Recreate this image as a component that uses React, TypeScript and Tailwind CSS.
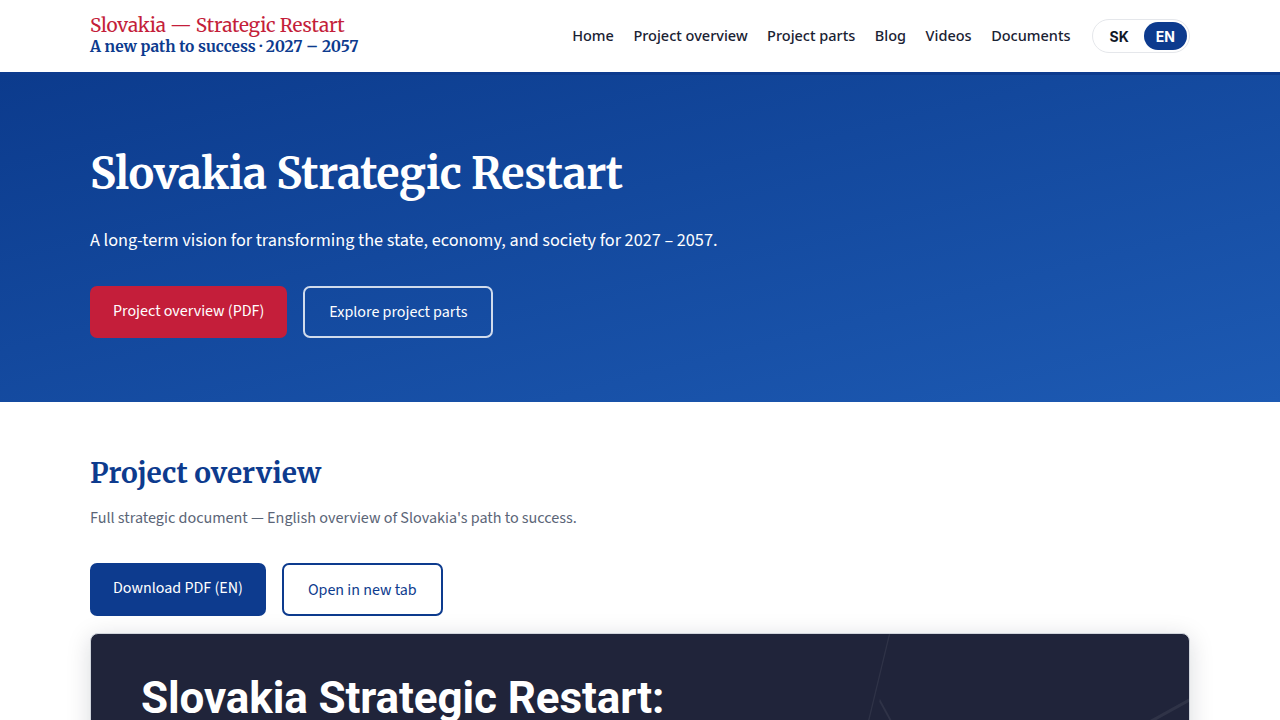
import React from "react";

const serif = "font-['Merriweather','DejaVu_Serif',serif]";
const sans = "font-['Source_Sans_3','Lato',sans-serif]";

const navLinks = ["Home", "Project overview", "Project parts", "Blog", "Videos", "Documents"];

function Header() {
  return (
    <header className="bg-white border-b-[3px] border-[#0d3b8e]">
      <div className="max-w-[1100px] mx-auto h-[72px] flex items-center justify-between">
        <a href="#" className={`${serif} flex flex-col leading-none -mt-[2px]`}>
          <span className="text-[#c41e3a] text-[19px] tracking-[-0.2px]">Slovakia — Strategic Restart</span>
          <span className="text-[#0d3b8e] text-[15.5px] font-bold mt-[4px]">A new path to success · 2027 – 2057</span>
        </a>
        <div className="flex items-center">
          <nav className="font-['Noto_Sans',sans-serif] flex items-center gap-[19.5px] text-[14.5px] font-medium text-[#1a2233] mr-[21px]">
            {navLinks.map((l) => (
              <a key={l} href="#">{l}</a>
            ))}
          </nav>
          <div className="flex items-center h-[34px] rounded-full border border-gray-200 p-[2px] font-['Inter',sans-serif] text-[14px] font-bold">
            <span className="px-[15px] text-[#111827]">SK</span>
            <span className="h-[28px] px-[12px] flex items-center rounded-full bg-[#0d3b8e] text-white">EN</span>
          </div>
        </div>
      </div>
    </header>
  );
}

function Hero() {
  return (
    <section className="bg-gradient-to-br from-[#0c3b8d] to-[#1d5ab3] h-[327px]">
      <div className="max-w-[1100px] mx-auto pt-[78px]">
        <h1 className={`${serif} text-white text-[43px] font-bold leading-none tracking-[-0.5px]`}>
          Slovakia Strategic Restart
        </h1>
        <p className={`${sans} text-white text-[18.2px] mt-[31px]`}>
          A long-term vision for transforming the state, economy, and society for 2027 – 2057.
        </p>
        <div className={`${sans} flex gap-[16px] mt-[32px] text-[16px]`}>
          <a href="#" className="h-[52px] px-[23px] flex items-center rounded-[7px] bg-[#c41e3a] text-white pb-[3px]">
            Project overview (PDF)
          </a>
          <a href="#" className="h-[52px] px-[24px] flex items-center rounded-[7px] border-2 border-white/80 text-white">
            Explore project parts
          </a>
        </div>
      </div>
    </section>
  );
}

// faint diagonal strokes behind the preview title
function PreviewLines() {
  return (
    <svg className="absolute inset-0 w-full h-full" viewBox="0 0 1100 90" preserveAspectRatio="none">
      <g stroke="#ffffff" strokeOpacity="0.07" strokeWidth="1" fill="none">
        <line x1="660" y1="40" x2="850" y2="140" />
        <line x1="640" y1="120" x2="760" y2="30" />
        <line x1="720" y1="100" x2="800" y2="0" />
        <line x1="790" y1="20" x2="990" y2="130" />
        <line x1="880" y1="30" x2="880" y2="120" />
        <line x1="980" y1="40" x2="1100" y2="20" />
        <line x1="1040" y1="110" x2="1100" y2="60" />
      </g>
    </svg>
  );
}

function Overview() {
  return (
    <section className="bg-white">
      <div className="max-w-[1100px] mx-auto pt-[57px]">
        <h2 className={`${serif} text-[#0d3b8e] text-[28px] font-bold leading-none`}>Project overview</h2>
        <p className={`${sans} text-[#5b6577] text-[16.1px] mt-[19px]`}>
          Full strategic document — English overview of Slovakia's path to success.
        </p>
        <div className={`${sans} flex gap-[16px] mt-[33px] text-[16px]`}>
          <a href="#" className="h-[53px] px-[23px] flex items-center rounded-[7px] bg-[#0d3b8e] text-white pb-[4px]">
            Download PDF (EN)
          </a>
          <a href="#" className="h-[53px] px-[24px] flex items-center rounded-[7px] border-2 border-[#0d3b8e] text-[#0d3b8e]">
            Open in new tab
          </a>
        </div>
        <div className="relative mt-[17px] h-[300px] rounded-[8px] bg-[#20243a] border border-gray-300 shadow-[0_4px_24px_rgba(15,23,42,0.15)] overflow-hidden">
          <PreviewLines />
          <div className="relative pl-[50px] pt-[42px]">
            <h3 className="font-['Roboto',sans-serif] text-white text-[44px] font-bold leading-none tracking-[-0.1px]">
              Slovakia Strategic Restart:
            </h3>
          </div>
        </div>
      </div>
    </section>
  );
}

export default function App() {
  return (
    <div className="min-h-screen bg-white">
      <Header />
      <Hero />
      <Overview />
    </div>
  );
}
